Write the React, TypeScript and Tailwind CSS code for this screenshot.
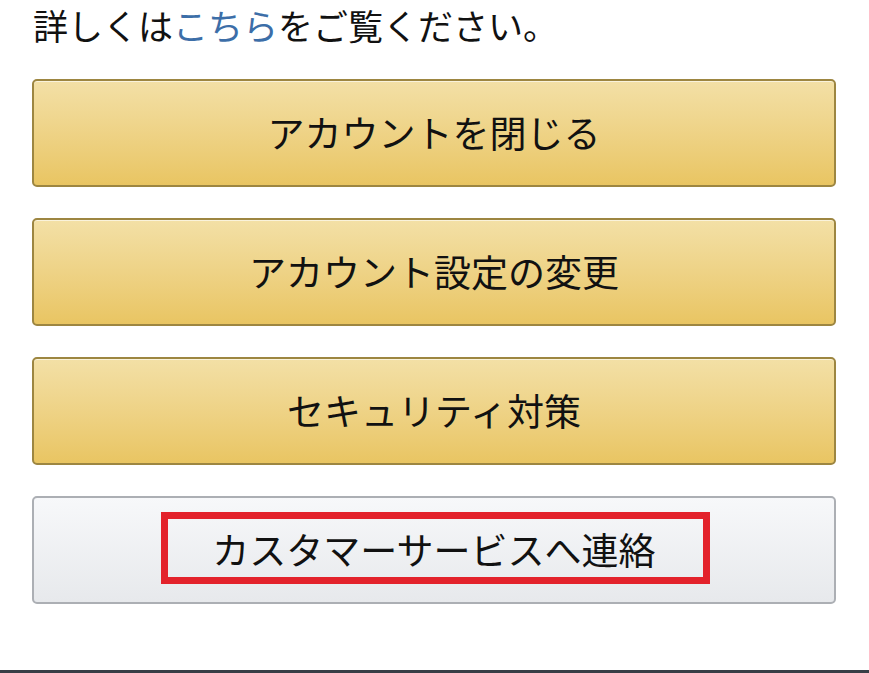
import React from "react";

const font = { fontFamily: '"Noto Sans CJK JP", "Noto Sans", sans-serif' };

function GoldButton({ label }: { label: string }) {
  return (
    <div className="h-[108px] w-full rounded-[5px] border-2 border-[#9d8641] bg-gradient-to-b from-[#f3e0a6] to-[#e9c562] flex items-center justify-center text-[37px] text-[#111] shadow-[inset_0_1px_0_rgba(255,255,255,0.6)]">
      {label}
    </div>
  );
}

export default function App() {
  return (
    <div className="w-[869px] h-[673px] bg-white relative overflow-hidden" style={font}>
      <div className="px-8 pt-[4px]">
        <p className="text-[35px] leading-[42px] text-[#111] pl-[1px]">
          詳しくは<span className="text-[#3c6ea8]">こちら</span>をご覧ください。
        </p>
        <div className="mt-[33px] flex flex-col gap-[31px] w-[804px]">
          <GoldButton label="アカウントを閉じる" />
          <GoldButton label="アカウント設定の変更" />
          <GoldButton label="セキュリティ対策" />
          <div className="relative h-[108px] w-full rounded-[5px] border-2 border-[#acafb4] bg-gradient-to-b from-[#f7f8fa] to-[#e7e9ec] flex items-center justify-center text-[37px] text-[#111]">
            カスタマーサービスへ連絡
            <div className="absolute left-[127px] top-[14px] w-[549px] h-[72px] border-[7px] border-[#e3222b]" />
          </div>
        </div>
      </div>
      <div className="absolute left-0 right-0 bottom-0 h-[3px] bg-[#383e46]" />
    </div>
  );
}
